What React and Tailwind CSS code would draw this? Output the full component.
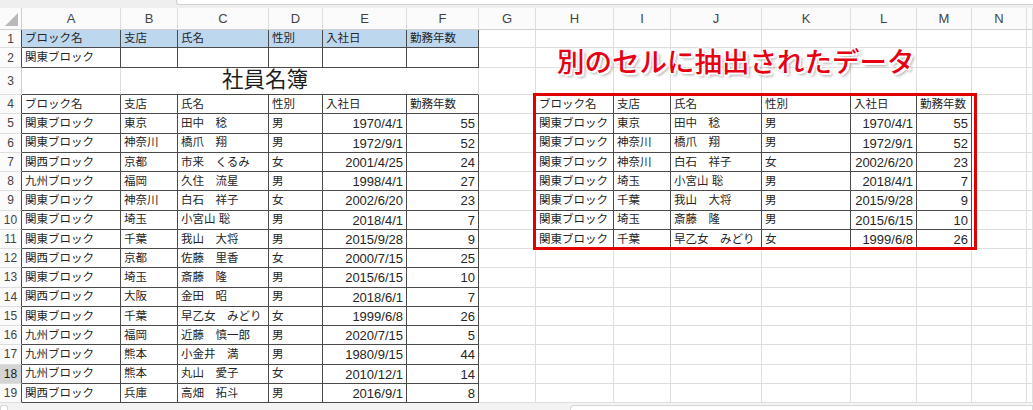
import React from 'react';

const LETTERS = ['A', 'B', 'C', 'D', 'E', 'F', 'G', 'H', 'I', 'J', 'K', 'L', 'M', 'N', ''];
const GRID = 'grid grid-cols-[22px_99px_57px_91px_54px_84px_72px_57px_78px_57px_91px_89px_66px_55px_55px_6px]';

const HEAD = ['ブロック名', '支店', '氏名', '性別', '入社日', '勤務年数'];

const staff = [
  ['関東ブロック', '東京', '田中　稔', '男', '1970/4/1', '55'],
  ['関東ブロック', '神奈川', '橋爪　翔', '男', '1972/9/1', '52'],
  ['関西ブロック', '京都', '市来　くるみ', '女', '2001/4/25', '24'],
  ['九州ブロック', '福岡', '久住　流星', '男', '1998/4/1', '27'],
  ['関東ブロック', '神奈川', '白石　祥子', '女', '2002/6/20', '23'],
  ['関東ブロック', '埼玉', '小宮山 聡', '男', '2018/4/1', '7'],
  ['関東ブロック', '千葉', '我山　大将', '男', '2015/9/28', '9'],
  ['関西ブロック', '京都', '佐藤　里香', '女', '2000/7/15', '25'],
  ['関東ブロック', '埼玉', '斎藤　隆', '男', '2015/6/15', '10'],
  ['関西ブロック', '大阪', '金田　昭', '男', '2018/6/1', '7'],
  ['関東ブロック', '千葉', '早乙女　みどり', '女', '1999/6/8', '26'],
  ['九州ブロック', '福岡', '近藤　慎一郎', '男', '2020/7/15', '5'],
  ['九州ブロック', '熊本', '小金井　満', '男', '1980/9/15', '44'],
  ['九州ブロック', '熊本', '丸山　愛子', '女', '2010/12/1', '14'],
  ['関西ブロック', '兵庫', '高畑　拓斗', '男', '2016/9/1', '8'],
];

// rows copied out by the filter (関東ブロック only)
const kanto = staff.filter((s) => s[0] === '関東ブロック');

const inLeft = (r, c) => c >= 1 && c <= 6 && (r === 1 || r === 2 || (r >= 4 && r <= 19));
const inRight = (r, c) => c >= 8 && c <= 13 && r >= 4 && r <= 11;
const inTable = (r, c) => inLeft(r, c) || inRight(r, c);

const cellValue = (r, c) => {
  if (r === 1 && c <= 6) return HEAD[c - 1];
  if (r === 2 && c === 1) return '関東ブロック';
  if (r === 4 && c <= 6) return HEAD[c - 1];
  if (r >= 5 && r <= 19 && c <= 6) return staff[r - 5][c - 1];
  if (r === 4 && c >= 8 && c <= 13) return HEAD[c - 8];
  if (r >= 5 && r <= 11 && c >= 8 && c <= 13) return kanto[r - 5][c - 8];
  return '';
};

const isNum = (r, c) => r >= 5 && ((c >= 5 && c <= 6) || (c >= 12 && c <= 13));

const Cell = ({ r, c }) => {
  const value = cellValue(r, c);
  const darkR = inTable(r, c) || inTable(r, c + 1);
  const darkB = inTable(r, c) || inTable(r + 1, c);
  return (
    <div
      className={
        'flex items-center overflow-hidden whitespace-nowrap border-r border-b pt-[1px] leading-none text-[#262626] ' +
        (darkR ? 'border-r-[#4a4a4a] ' : 'border-r-[#dedede] ') +
        (darkB ? 'border-b-[#4a4a4a] ' : 'border-b-[#dedede] ') +
        (r === 1 && c <= 6 ? 'bg-[#bdd7ee] ' : 'bg-white ') +
        (isNum(r, c) ? 'justify-end pr-[3px] text-[13px]' : 'pl-[3px] text-[11.5px]')
      }
    >
      {value}
    </div>
  );
};

const RowHead = ({ r }) => (
  <div
    className={
      'flex items-center justify-center border-r border-b border-b-[#dedede] text-[12px] leading-none ' +
      (r === 18 ? 'bg-[#d4d4d4] text-[#1e1e1e] border-r-[#217346]' : 'bg-[#fbfbfb] text-[#444] ') +
      (r !== 18 && inTable(r, 1) ? 'border-r-[#4a4a4a]' : r !== 18 ? 'border-r-[#cfcfcf]' : '')
    }
  >
    {r}
  </div>
);

const Row = ({ r, h }) => (
  <div className={GRID + ' ' + h}>
    <RowHead r={r} />
    {LETTERS.map((_, i) => {
      const c = i + 1;
      if (r === 3 && c >= 3 && c <= 6) return null;
      if (r === 3 && c === 2) {
        return (
          <div key={c} className="col-span-5 flex items-center border-r border-b border-r-[#dedede] border-b-[#4a4a4a] bg-white pl-[101px] text-[21.5px] leading-none text-[#1e1e1e]">
            社員名簿
          </div>
        );
      }
      return <Cell key={c} r={r} c={c} />;
    })}
  </div>
);

export default function App() {
  const bodyRows = Array.from({ length: 16 }, (_, i) => i + 4);
  return (
    <div className="relative h-[410px] w-[1033px] overflow-hidden bg-white font-['Liberation_Sans','Noto_Sans_CJK_JP',sans-serif]">
      {/* formula bar strip */}
      <div className="flex h-[8px] bg-[#efefef]">
        <div className="ml-[176px] h-[5px] flex-1 rounded-bl-[3px] border-b border-l border-[#d0d0d0] bg-white" />
      </div>

      {/* column headers */}
      <div className={GRID + ' h-[22px]'}>
        <div className="flex items-end justify-end border-r border-b border-[#cfcfcf] bg-[#fbfbfb] p-[3px]">
          <svg width="13" height="13" viewBox="0 0 13 13">
            <polygon points="13,0 13,13 0,13" fill="#b9b9b9" />
          </svg>
        </div>
        {LETTERS.map((l, i) => (
          <div key={i} className="flex items-center justify-center border-r border-b border-r-[#dedede] border-b-[#cfcfcf] bg-[#fbfbfb] text-[13px] leading-none text-[#444]">
            {l}
          </div>
        ))}
      </div>

      <Row r={1} h="h-[18px]" />
      <Row r={2} h="h-[20px]" />
      <Row r={3} h="h-[27px]" />
      {bodyRows.map((r) => (
        <Row key={r} r={r} h="h-[19.25px]" />
      ))}

      {/* sheet tabs / scrollbar strip */}
      <div className="flex h-[8px] items-end bg-[#f3f3f3]">
        <div className="h-[6px] w-[8px] rounded-t-[3px] border border-b-0 border-[#d6d6d6] bg-white" />
        <div className="ml-[562px] h-[6px] flex-1 rounded-tl-[4px] border border-b-0 border-[#d6d6d6] bg-white" />
      </div>

      {/* callout text box over the sheet */}
      <div className="absolute left-[557px] top-[49px] text-[27.5px] font-medium leading-none text-[#e60012] [text-shadow:1px_1px_0_#fff,-1px_-1px_0_#fff,1px_-1px_0_#fff,-1px_1px_0_#fff,2px_2px_0_#fff,3px_3px_3px_rgba(0,0,0,0.35)]">
        別のセルに抽出されたデータ
      </div>

      {/* red frame around the extracted range */}
      <div className="pointer-events-none absolute left-[533px] top-[93px] h-[157px] w-[444px] border-[3px] border-[#e00000]" />
    </div>
  );
}
